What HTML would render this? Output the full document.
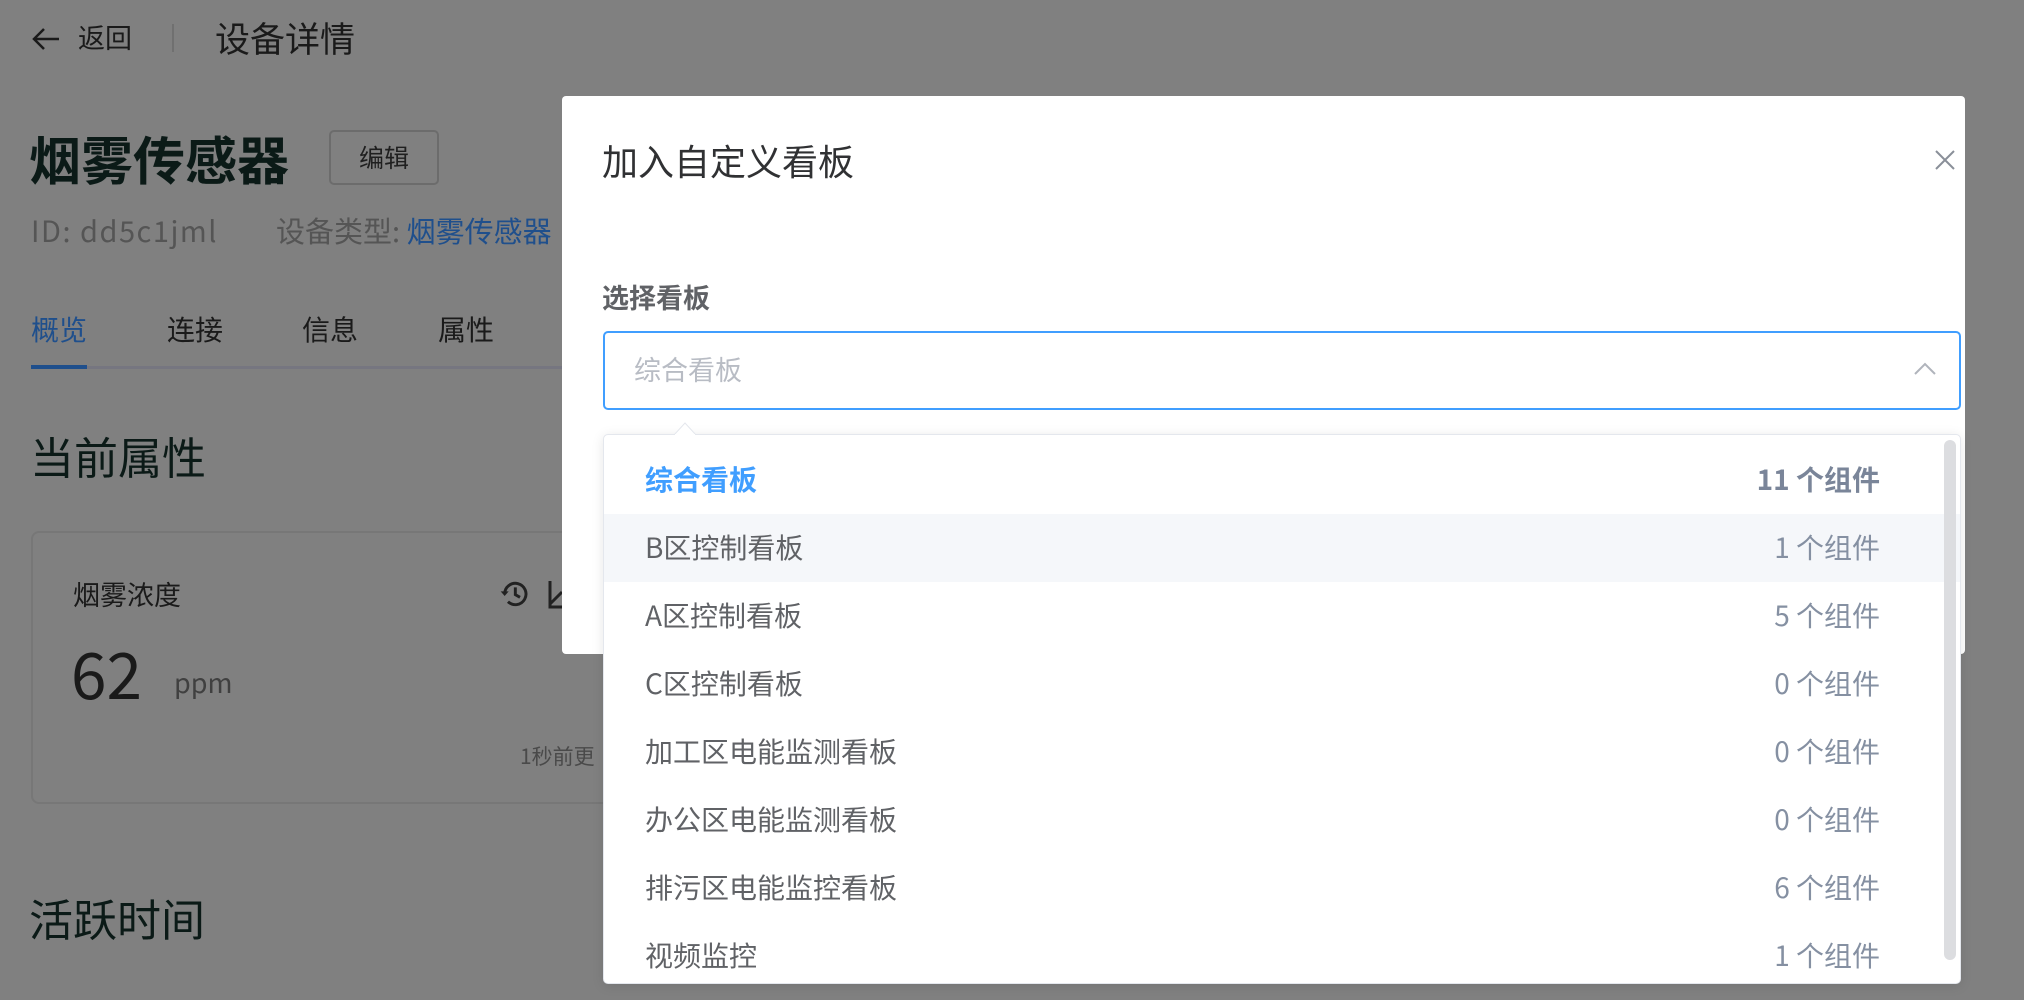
<!DOCTYPE html>
<html><head><meta charset="utf-8"><style>
*{box-sizing:border-box;margin:0;padding:0}
body{width:2024px;height:1000px;overflow:hidden;background:#808080;font-family:"Noto Sans CJK SC","Liberation Sans",sans-serif;line-height:1.2;position:relative;color:#1a1a1a}
.a{position:absolute;white-space:nowrap}
.row{position:absolute;left:0;right:16px;height:68px;display:flex;align-items:center;justify-content:space-between;padding:0 64px 0 41px;font-size:28px;color:#606266}
.row .c{color:#8590a2}
</style></head><body>
<svg class="a" style="left:31px;top:26px" width="30" height="26" viewBox="0 0 30 26"><path d="M28 13H3M13 3L3 13l10 10" fill="none" stroke="#1a1a1a" stroke-width="2.5"/></svg>
<div class="a" style="left:78px;top:21px;font-size:27px;color:#1a1a1a">返回</div>
<div class="a" style="left:172px;top:24px;width:2px;height:28px;background:#707070"></div>
<div class="a" style="left:215px;top:17px;font-size:35px;color:#1a1a1a">设备详情</div>
<div class="a" style="left:29px;top:127px;font-size:52px;font-weight:bold;color:#0b1a17">烟雾传感器</div>
<div class="a" style="left:329px;top:130px;width:110px;height:55px;border:2px solid #6c6c6c;border-radius:5px;font-size:25px;text-align:center;line-height:50px;color:#1f1f1f">编辑</div>
<div class="a" style="left:31px;top:213px;font-size:29px;letter-spacing:1.5px;color:#555">ID: dd5c1jml</div>
<div class="a" style="left:276px;top:213px;font-size:29px;color:#555">设备类型: <span style="color:#1f4f8c">烟雾传感器</span></div>
<div class="a" style="left:31px;top:313px;font-size:28px;color:#1f4f8c">概览</div>
<div class="a" style="left:167px;top:313px;font-size:28px;color:#1a1a1a">连接</div>
<div class="a" style="left:302px;top:313px;font-size:28px;color:#1a1a1a">信息</div>
<div class="a" style="left:438px;top:313px;font-size:28px;color:#1a1a1a">属性</div>
<div class="a" style="left:31px;top:366px;width:540px;height:3px;background:#767680"></div>
<div class="a" style="left:31px;top:365px;width:56px;height:4px;background:#1f4f8c"></div>
<div class="a" style="left:30px;top:429px;font-size:44px;color:#0b1a17">当前属性</div>
<div class="a" style="left:31px;top:531px;width:700px;height:273px;border:2px solid #777;border-radius:8px"></div>
<div class="a" style="left:73px;top:578px;font-size:27px;color:#1a1a1a">烟雾浓度</div>
<svg class="a" style="left:498px;top:578px" width="32" height="32" viewBox="0 0 24 24"><path d="M5 12a8 8 0 1 1 2.5 5.8" fill="none" stroke="#222" stroke-width="2.2"/><path d="M2 10l3 3.5 3-3.5z" fill="#222"/><path d="M13 7v5.5l3.5 2" fill="none" stroke="#222" stroke-width="2.2"/></svg>
<svg class="a" style="left:547px;top:578px" width="20" height="32" viewBox="0 0 20 32"><path d="M3 3v26h17M3 26l12-12" fill="none" stroke="#222" stroke-width="3"/></svg>
<div class="a" style="left:71px;top:634px;font-size:64px;color:#1a1a1a">62</div>
<div class="a" style="left:174px;top:666px;font-size:27px;color:#404040">ppm</div>
<div class="a" style="left:520px;top:744px;font-size:21px;color:#4a4a4a">1秒前更</div>
<div class="a" style="left:29px;top:891px;font-size:44px;color:#0b1a17">活跃时间</div>

<div class="a" style="left:562px;top:96px;width:1403px;height:558px;background:#fff;border-radius:4px"></div>
<div class="a" style="left:602px;top:139px;font-size:36px;color:#303133">加入自定义看板</div>
<svg class="a" style="left:1934px;top:149px" width="22" height="22" viewBox="0 0 22 22"><path d="M2 2l18 18M20 2L2 20" stroke="#8a8f99" stroke-width="2"/></svg>
<div class="a" style="left:602px;top:281px;font-size:27px;color:#606266;font-weight:bold">选择看板</div>
<div class="a" style="left:603px;top:331px;width:1358px;height:79px;border:2px solid #409eff;border-radius:5px"></div>
<div class="a" style="left:634px;top:353px;font-size:27px;color:#b8bcc4">综合看板</div>
<svg class="a" style="left:1914px;top:362px" width="22" height="14" viewBox="0 0 22 14"><path d="M1 12L11 2l10 10" fill="none" stroke="#b0b4bc" stroke-width="2"/></svg>

<div class="a" style="left:603px;top:434px;width:1358px;height:550px;background:#fff;border:1px solid #e4e7ed;border-radius:5px;box-shadow:0 2px 12px rgba(0,0,0,.1);overflow:hidden">
<div class="row" style="top:11px;color:#409eff;font-weight:bold">综合看板<span class="c" style="font-weight:bold;color:#7a8599">11 个组件</span></div>
<div class="row" style="top:79px;background:#f5f7fa;right:0;padding-right:80px">B区控制看板<span class="c">1 个组件</span></div>
<div class="row" style="top:147px">A区控制看板<span class="c">5 个组件</span></div>
<div class="row" style="top:215px">C区控制看板<span class="c">0 个组件</span></div>
<div class="row" style="top:283px">加工区电能监测看板<span class="c">0 个组件</span></div>
<div class="row" style="top:351px">办公区电能监测看板<span class="c">0 个组件</span></div>
<div class="row" style="top:419px">排污区电能监控看板<span class="c">6 个组件</span></div>
<div class="row" style="top:487px">视频监控<span class="c">1 个组件</span></div>
<div class="a" style="left:1340px;top:5px;width:12px;height:520px;background:#dcdde0;border-radius:6px"></div>
</div>
<svg class="a" style="left:674px;top:422px" width="22" height="13" viewBox="0 0 22 13"><path d="M0 13L11 1l11 12z" fill="#fff" stroke="#e4e7ed"/><path d="M1 13h20" stroke="#fff" stroke-width="2"/></svg>
</body></html>
